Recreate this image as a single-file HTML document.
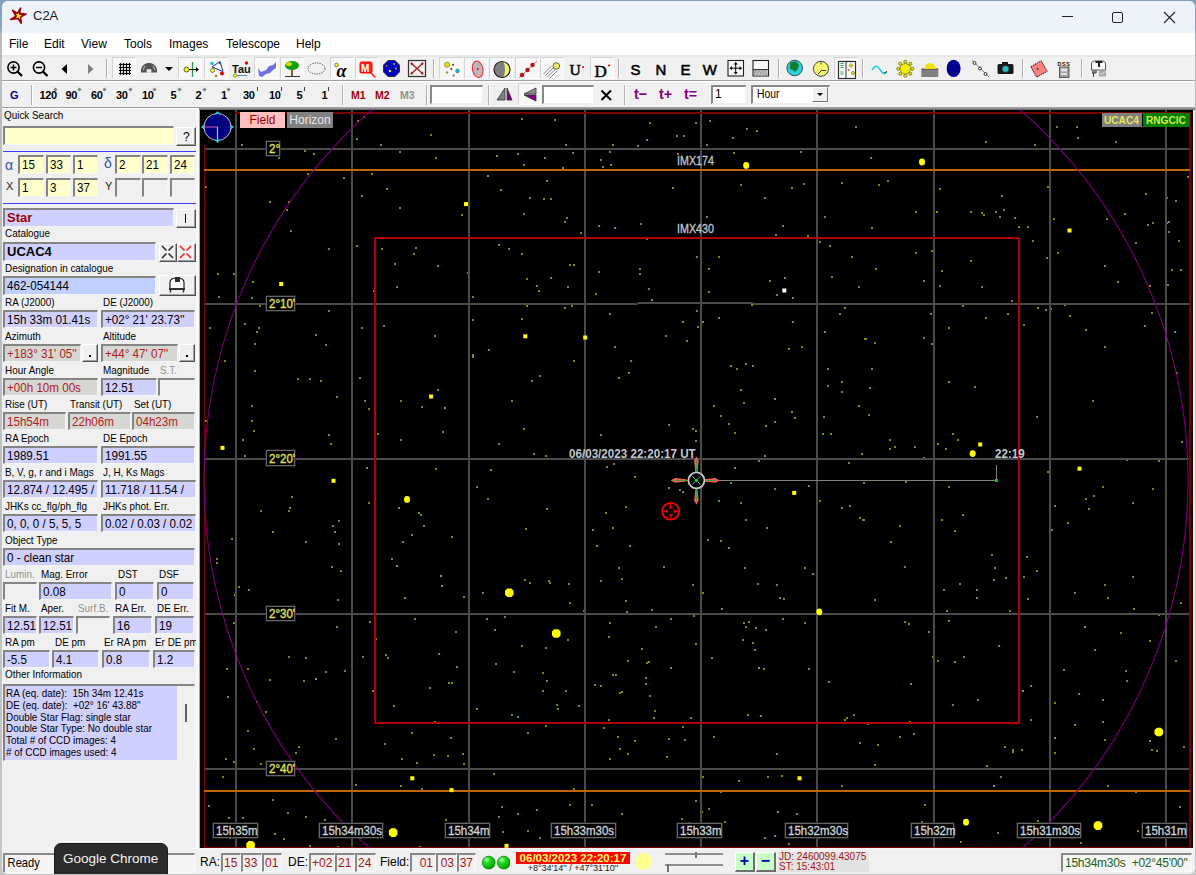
<!DOCTYPE html><html><head><meta charset="utf-8"><style>
*{box-sizing:border-box;margin:0;padding:0}
html,body{width:1196px;height:875px;overflow:hidden;background:linear-gradient(to bottom,#7f9fbd 0,#8aa8c4 28px,#b8bcc0 36px,#c4c4c4 100%);font-family:"Liberation Sans",sans-serif;font-size:11px;color:#000;position:relative}
.a{position:absolute}
.m{position:absolute;top:37px;font-size:12px;color:#000;line-height:14px}
.fld{position:absolute;border-top:2px solid #848484;border-left:2px solid #848484;border-right:1px solid #f4f4f4;border-bottom:1px solid #f4f4f4;font-size:13.5px;letter-spacing:0;padding-left:2px;line-height:16px;white-space:nowrap;overflow:hidden}
.sx{display:inline-block;transform:scaleX(.86);transform-origin:0 50%}
.y{background:#ffffcc}
.l{background:#d0d0fe}
.lb{background:#c0d0fe}
.g{background:#d6d6d2;color:#b01c1c}
.e{background:#f0f0f0}
.lbl{position:absolute;font-size:11.5px;letter-spacing:0;white-space:nowrap;line-height:12px;transform:scaleX(.86);transform-origin:0 0}
.dis{color:#909090}
.btn{position:absolute;background:#f0f0f0;border-top:1px solid #fff;border-left:1px solid #fff;border-right:1px solid #505050;border-bottom:1px solid #505050;box-shadow:inset -1px -1px 0 #a0a0a0}
.ti{position:absolute;font-size:12px;font-weight:bold;line-height:14px;white-space:nowrap}
</style></head><body><div id="w" style="position:absolute;left:0;top:0;width:1196px;height:875px;background:#f0f0f0;clip-path:inset(1px 1px 1px 2px round 6px)">
<div class="a" style="left:0;top:0;width:1196px;height:33px;background:#eef2f9"></div>
<div class="a" style="left:0;top:33px;width:1196px;height:22px;background:#fff"></div>
<span class="a" style="left:33px;top:8px;font-size:13px;color:#1a1a1a">C2A</span>
<div class="a" style="left:1062px;top:16px;width:11px;height:1px;background:#222"></div>
<div class="a" style="left:1112px;top:12px;width:11px;height:11px;border:1px solid #222;border-radius:2px"></div>
<svg class="a" style="left:1163px;top:11px" width="13" height="13"><path d="M1 1L12 12M12 1L1 12" stroke="#222" stroke-width="1.1"/></svg>
<svg class="a" style="left:9px;top:7px" width="19" height="19" viewBox="0 0 19 19"><path d="M11.6 1.2 L10.6 6.2 L17 7 L11.6 10 L12.3 16.3 L8.8 11.4 L1.6 12.5 L7 9.3 L3.7 3.3 L8.3 6.5 Z" fill="#9c0000" stroke="#9c0000" stroke-width="1.6" stroke-linejoin="round"/><path d="M9.5 5.5l0.8 2.6 2.6 0.3-2.2 1.4 0.4 2.7-1.7-2-2.4 0.6 1.2-2.3-1.6-2.1 2.4 0.6z" fill="#ffff00"/></svg>
<span class="m" style="left:9px">File</span>
<span class="m" style="left:44px">Edit</span>
<span class="m" style="left:81px">View</span>
<span class="m" style="left:124px">Tools</span>
<span class="m" style="left:169px">Images</span>
<span class="m" style="left:226px">Telescope</span>
<span class="m" style="left:296px">Help</span>
<div class="a" style="left:0;top:55px;width:1196px;height:2px;background:#e8e8e8"></div>
<div class="a" style="left:0;top:80px;width:1196px;height:1px;background:#a0a0a0"></div>
<div class="a" style="left:0;top:81px;width:1196px;height:1px;background:#fff"></div>
<div class="a" style="left:0;top:107px;width:1196px;height:1px;background:#a0a0a0"></div>
<div class="a" style="left:0;top:108px;width:1196px;height:1px;background:#fff"></div>
<div class="a" style="left:112px;top:57px;width:24px;height:22px;background:#f7f7f7;border-top:1px solid #d4d4d4;border-left:1px solid #d4d4d4;border-right:1px solid #fcfcfc;border-bottom:1px solid #fcfcfc"></div>
<div class="a" style="left:178px;top:57px;width:24px;height:22px;background:#f7f7f7;border-top:1px solid #d4d4d4;border-left:1px solid #d4d4d4;border-right:1px solid #fcfcfc;border-bottom:1px solid #fcfcfc"></div>
<div class="a" style="left:204px;top:57px;width:24px;height:22px;background:#f7f7f7;border-top:1px solid #d4d4d4;border-left:1px solid #d4d4d4;border-right:1px solid #fcfcfc;border-bottom:1px solid #fcfcfc"></div>
<div class="a" style="left:254px;top:57px;width:24px;height:22px;background:#f7f7f7;border-top:1px solid #d4d4d4;border-left:1px solid #d4d4d4;border-right:1px solid #fcfcfc;border-bottom:1px solid #fcfcfc"></div>
<div class="a" style="left:280px;top:57px;width:24px;height:22px;background:#f7f7f7;border-top:1px solid #d4d4d4;border-left:1px solid #d4d4d4;border-right:1px solid #fcfcfc;border-bottom:1px solid #fcfcfc"></div>
<div class="a" style="left:330px;top:57px;width:24px;height:22px;background:#f7f7f7;border-top:1px solid #d4d4d4;border-left:1px solid #d4d4d4;border-right:1px solid #fcfcfc;border-bottom:1px solid #fcfcfc"></div>
<div class="a" style="left:355px;top:57px;width:24px;height:22px;background:#f7f7f7;border-top:1px solid #d4d4d4;border-left:1px solid #d4d4d4;border-right:1px solid #fcfcfc;border-bottom:1px solid #fcfcfc"></div>
<div class="a" style="left:439px;top:57px;width:24px;height:22px;background:#f7f7f7;border-top:1px solid #d4d4d4;border-left:1px solid #d4d4d4;border-right:1px solid #fcfcfc;border-bottom:1px solid #fcfcfc"></div>
<div class="a" style="left:464px;top:57px;width:24px;height:22px;background:#f7f7f7;border-top:1px solid #d4d4d4;border-left:1px solid #d4d4d4;border-right:1px solid #fcfcfc;border-bottom:1px solid #fcfcfc"></div>
<div class="a" style="left:489px;top:57px;width:24px;height:22px;background:#f7f7f7;border-top:1px solid #d4d4d4;border-left:1px solid #d4d4d4;border-right:1px solid #fcfcfc;border-bottom:1px solid #fcfcfc"></div>
<div class="a" style="left:515px;top:57px;width:24px;height:22px;background:#f7f7f7;border-top:1px solid #d4d4d4;border-left:1px solid #d4d4d4;border-right:1px solid #fcfcfc;border-bottom:1px solid #fcfcfc"></div>
<div class="a" style="left:540px;top:57px;width:24px;height:22px;background:#f7f7f7;border-top:1px solid #d4d4d4;border-left:1px solid #d4d4d4;border-right:1px solid #fcfcfc;border-bottom:1px solid #fcfcfc"></div>
<div class="a" style="left:590px;top:57px;width:24px;height:22px;background:#f7f7f7;border-top:1px solid #d4d4d4;border-left:1px solid #d4d4d4;border-right:1px solid #fcfcfc;border-bottom:1px solid #fcfcfc"></div>
<div class="a" style="left:834px;top:57px;width:24px;height:22px;background:#f7f7f7;border-top:1px solid #d4d4d4;border-left:1px solid #d4d4d4;border-right:1px solid #fcfcfc;border-bottom:1px solid #fcfcfc"></div>
<div class="a" style="left:106px;top:59px;width:1px;height:19px;background:#b0b0b0"></div><div class="a" style="left:107px;top:59px;width:1px;height:19px;background:#fff"></div>
<div class="a" style="left:433px;top:59px;width:1px;height:19px;background:#b0b0b0"></div><div class="a" style="left:434px;top:59px;width:1px;height:19px;background:#fff"></div>
<div class="a" style="left:618px;top:59px;width:1px;height:19px;background:#b0b0b0"></div><div class="a" style="left:619px;top:59px;width:1px;height:19px;background:#fff"></div>
<div class="a" style="left:778px;top:59px;width:1px;height:19px;background:#b0b0b0"></div><div class="a" style="left:779px;top:59px;width:1px;height:19px;background:#fff"></div>
<div class="a" style="left:862px;top:59px;width:1px;height:19px;background:#b0b0b0"></div><div class="a" style="left:863px;top:59px;width:1px;height:19px;background:#fff"></div>
<div class="a" style="left:1022px;top:59px;width:1px;height:19px;background:#b0b0b0"></div><div class="a" style="left:1023px;top:59px;width:1px;height:19px;background:#fff"></div>
<div class="a" style="left:1081px;top:59px;width:1px;height:19px;background:#b0b0b0"></div><div class="a" style="left:1082px;top:59px;width:1px;height:19px;background:#fff"></div>
<div class="a" style="left:31px;top:85px;width:1px;height:20px;background:#b0b0b0"></div><div class="a" style="left:32px;top:85px;width:1px;height:20px;background:#fff"></div>
<div class="a" style="left:342px;top:85px;width:1px;height:20px;background:#b0b0b0"></div><div class="a" style="left:343px;top:85px;width:1px;height:20px;background:#fff"></div>
<div class="a" style="left:426px;top:85px;width:1px;height:20px;background:#b0b0b0"></div><div class="a" style="left:427px;top:85px;width:1px;height:20px;background:#fff"></div>
<div class="a" style="left:488px;top:85px;width:1px;height:20px;background:#b0b0b0"></div><div class="a" style="left:489px;top:85px;width:1px;height:20px;background:#fff"></div>
<div class="a" style="left:624px;top:85px;width:1px;height:20px;background:#b0b0b0"></div><div class="a" style="left:625px;top:85px;width:1px;height:20px;background:#fff"></div>
<div class="a" style="left:518px;top:83px;width:23px;height:22px;background:#f7f7f7;border-top:1px solid #d4d4d4;border-left:1px solid #d4d4d4;border-right:1px solid #fcfcfc;border-bottom:1px solid #fcfcfc"></div>
<svg class="a" style="left:0;top:55px" width="1196" height="26" viewBox="0 55 1196 26"><circle cx="13.5" cy="67.5" r="5.6" fill="none" stroke="#000" stroke-width="1.6"/><path d="M17.5 71.5L22 76" stroke="#000" stroke-width="2.2"/><path d="M10.5 67.5h6M13.5 64.5v6" stroke="#000" stroke-width="1.6"/><circle cx="39" cy="67.5" r="5.6" fill="none" stroke="#000" stroke-width="1.6"/><path d="M43 71.5L47.5 76" stroke="#000" stroke-width="2.2"/><path d="M36 67.5h6" stroke="#000" stroke-width="1.6"/><path d="M67 64v10l-5.5-5z" fill="#000"/><path d="M88 64v10l5.5-5z" fill="#808080"/><path d="M119 64.5h12M119 67.5h12M119 70.5h12M119 73.5h12M120.5 63v12M123.5 63v12M126.5 63v12M129.5 63v12" stroke="#000" stroke-width="1.2"/><path d="M141 72.5v-3c1-4 4-6.5 8-6.5s7 2.5 8 6.5v3z" fill="#555"/><path d="M147 72.5v-3h4v3z M143 70l2-4 M155 70l-2-4" stroke="#ddd" stroke-width="0.8" fill="#eee"/><path d="M165 67h8l-4 4z" fill="#000"/><circle cx="186.5" cy="69.5" r="2.5" fill="#ffff00" stroke="#333" stroke-width="0.8"/><path d="M192.5 62v15" stroke="#20a040" stroke-width="1.3"/><path d="M189 69.5h8" stroke="#000" stroke-width="1.2"/><path d="M199 69.5l-3-2.5v5z" fill="#000"/><path d="M212 67l8-5.5 3 10z" fill="none" stroke="#2030a0" stroke-width="1"/><circle cx="212" cy="63.5" r="1.8" fill="#20c0e0"/><circle cx="220" cy="63" r="1.3" fill="#207080"/><circle cx="212.5" cy="70.5" r="2" fill="#ffff00" stroke="#333" stroke-width="0.6"/><circle cx="222" cy="73.5" r="2" fill="#e00000"/><circle cx="216" cy="76" r="1.3" fill="#a09020"/><text x="232" y="73" font-family="Liberation Sans" font-weight="bold" font-size="11" fill="#111">Tau</text><circle cx="246.5" cy="63" r="1.7" fill="#e00000"/><circle cx="235" cy="75.5" r="1.7" fill="#ffff00" stroke="#333" stroke-width="0.5"/><path d="M237 75.5h10" stroke="#2080a0" stroke-width="0.8"/><path d="M258 68l3 4 5-2 3-4 4-1 3-3v6l-3 2-3 3-4 1-4 3-3-1z" fill="#7070e0"/><ellipse cx="292" cy="65.5" rx="7" ry="4.5" fill="#10a010"/><ellipse cx="289" cy="64" rx="3" ry="2" fill="#d0e000"/><path d="M291 69h2v7h-2z" fill="#806020"/><path d="M285 76.5h15" stroke="#333" stroke-width="1.2"/><ellipse cx="316.5" cy="68.5" rx="8.5" ry="5.5" fill="none" stroke="#404040" stroke-width="1" stroke-dasharray="1.2 1.2"/><circle cx="336.5" cy="65" r="1.8" fill="#ffff00" stroke="#333" stroke-width="0.6"/><text x="336.5" y="76.5" font-family="Liberation Serif" font-style="italic" font-weight="bold" font-size="18" fill="#000">α</text><rect x="360" y="62" width="12" height="11" rx="1.5" fill="#ff2020" stroke="#ff0000" stroke-width="1"/><text x="361" y="71.5" font-family="Liberation Sans" font-weight="bold" font-size="10" fill="#fff">M</text><path d="M371 73l4.5 4.5" stroke="#ff0000" stroke-width="1.2"/><path d="M388 60.5h7l4.5 4.5v7l-4.5 4.5h-7l-4.5-4.5v-7z" fill="#0000c0" stroke="#202020" stroke-width="0.8"/><circle cx="390" cy="71" r="1.3" fill="#e0e000"/><circle cx="394" cy="64" r="1" fill="#c0c000"/><circle cx="396" cy="68.5" r="1" fill="#c0c000"/><circle cx="386.5" cy="66" r="0.8" fill="#c0c000"/><rect x="408.5" y="60.5" width="17" height="16" fill="#f0f0f0" stroke="#303030" stroke-width="1.2"/><path d="M411 63l12 11M423 63l-12 11" stroke="#a02020" stroke-width="1.3"/><path d="M410.5 62.5l3 0.5-2.5 2.5z M423.5 62.5l-3 0.5 2.5 2.5z M410.5 74.5l3-0.5-2.5-2.5z M423.5 74.5l-3-0.5 2.5-2.5z" fill="#a02020"/><circle cx="447" cy="64.7" r="2.6" fill="#e8e000" stroke="#555" stroke-width="0.5"/><circle cx="453" cy="64.7" r="1" fill="#802020"/><circle cx="451.3" cy="69" r="1" fill="#802020"/><circle cx="457.5" cy="71" r="1.9" fill="#20c0c0" stroke="#333" stroke-width="0.4"/><circle cx="447" cy="72.5" r="1.2" fill="#a09040"/><circle cx="453.7" cy="75.5" r="1.2" fill="#909090"/><ellipse cx="477.7" cy="69.3" rx="5.3" ry="8.3" transform="rotate(-12 477.7 69.3)" fill="#b8b8b8" stroke="#ff2020" stroke-width="1"/><circle cx="477.7" cy="69" r="1" fill="#ff0000"/><circle cx="502" cy="69.5" r="8" fill="#808080"/><path d="M502 61.5a8 8 0 0 1 0 16a3 8 0 0 0 0-16z" fill="#f4f070"/><circle cx="502" cy="69.5" r="8" fill="none" stroke="#202020" stroke-width="1.2"/><path d="M519 78L537 61" stroke="#c04040" stroke-width="0.8"/><circle cx="522" cy="75" r="1.9" fill="#e00000" stroke="#600" stroke-width="0.5"/><circle cx="527.5" cy="70" r="1.9" fill="#e00000" stroke="#600" stroke-width="0.5"/><circle cx="532.5" cy="65" r="1.9" fill="#e00000" stroke="#600" stroke-width="0.5"/><path d="M545 76l8-8M547 77.5l8-8M549 79l8-8M543.5 74l8-8" stroke="#606060" stroke-width="0.8"/><circle cx="556.3" cy="66" r="3.3" fill="#f0f070" stroke="#404040" stroke-width="0.8"/><text x="569.5" y="74.7" font-family="Liberation Serif" font-size="15.5" fill="#000" stroke="#000" stroke-width="0.5">U</text><circle cx="583" cy="67" r="1.1" fill="#ff0000"/><text x="594.5" y="77" font-family="Liberation Serif" font-size="17" fill="#000" stroke="#000" stroke-width="0.5">D</text><circle cx="609" cy="65.5" r="1.1" fill="#ff0000"/><text x="630.5" y="74.5" font-family="Liberation Sans" font-size="15" fill="#000" stroke="#000" stroke-width="0.55">S</text><text x="655.5" y="74.5" font-family="Liberation Sans" font-size="15" fill="#000" stroke="#000" stroke-width="0.55">N</text><text x="680.5" y="74.5" font-family="Liberation Sans" font-size="15" fill="#000" stroke="#000" stroke-width="0.55">E</text><text x="702.8" y="74.5" font-family="Liberation Sans" font-size="15" fill="#000" stroke="#000" stroke-width="0.55">W</text><rect x="728" y="60.5" width="15.5" height="15.5" fill="#f8f8f8" stroke="#202020" stroke-width="1.1"/><path d="M735.7 62.5v11.5M730 68.2h11.5" stroke="#000" stroke-width="1"/><path d="M735.7 62l-2 2.5h4z M735.7 74.5l-2-2.5h4z M729.5 68.2l2.5-2v4z M742 68.2l-2.5-2v4z" fill="#000"/><rect x="753" y="60.5" width="15.5" height="15.5" fill="#f8f8f8" stroke="#202020" stroke-width="1.1"/><rect x="754" y="70" width="13.5" height="5.5" fill="#a0a0a0"/><path d="M755 75.5l3-5M758 75.5l3-5M761 75.5l3-5M764 75.5l3-5" stroke="#e0e0e0" stroke-width="0.8"/><path d="M753 69.5h15.5" stroke="#202020" stroke-width="0.9"/><circle cx="794.7" cy="68" r="7.8" fill="#30d0e0" stroke="#203040" stroke-width="0.8"/><path d="M790 63c2-1 5-2 7-1l2 3-1 4 -3 3-2-2-3-1z" fill="#108030"/><circle cx="821" cy="68.8" r="7.5" fill="#f8f870" stroke="#404040" stroke-width="1"/><path d="M821 62.5v2M818 74l3.5-3.5h4.5" stroke="#303030" stroke-width="1" fill="none"/><rect x="838.5" y="61.5" width="17" height="17" fill="#fafafa" stroke="#303030" stroke-width="1.2"/><path d="M846 61.5v17" stroke="#303030" stroke-width="1"/><path d="M840.5 63.5h3M840.5 65.5h3M840.5 67.5h3M840.5 72h3M840.5 74h3" stroke="#20b040" stroke-width="1.2"/><path d="M849 65.5l2-2 2 2-2 2z M851 73l2-2 2 2-2 2z" fill="#e0d000" stroke="#606000" stroke-width="0.5"/><circle cx="848.5" cy="70" r="0.8" fill="#c00000"/><path d="M872 70c2-3 4-5 6-3s3 5 5 6 3 0 4-1" fill="none" stroke="#20d0e0" stroke-width="1.6"/><path d="M884 73c1 0 2-1 3-2" stroke="#303030" stroke-width="1"/><g fill="#e8e000" stroke="#505000" stroke-width="0.6"><circle cx="912.30" cy="68.80" r="1.6"/><circle cx="910.25" cy="73.75" r="1.6"/><circle cx="905.30" cy="75.80" r="1.6"/><circle cx="900.35" cy="73.75" r="1.6"/><circle cx="898.30" cy="68.80" r="1.6"/><circle cx="900.35" cy="63.85" r="1.6"/><circle cx="905.30" cy="61.80" r="1.6"/><circle cx="910.25" cy="63.85" r="1.6"/></g><circle cx="905.3" cy="68.8" r="5.2" fill="#f4f000" stroke="#606000" stroke-width="0.6"/><rect x="921.3" y="69" width="17" height="8" fill="#808080"/><path d="M921.3 69h17" stroke="#303030" stroke-width="0.8"/><path d="M924.5 69a5.4 5.8 0 0 1 11 0z" fill="#f0e000"/><ellipse cx="953.6" cy="68.4" rx="7" ry="8.6" fill="#000090"/><path d="M972 60.3L989 77" stroke="#404040" stroke-width="0.7"/><circle cx="974.5" cy="63" r="1.5" fill="#f0f0f0" stroke="#222" stroke-width="0.9"/><circle cx="980" cy="68.5" r="1.5" fill="#f0f0f0" stroke="#222" stroke-width="0.9"/><circle cx="985.5" cy="74" r="1.5" fill="#f0f0f0" stroke="#222" stroke-width="0.9"/><rect x="997.5" y="64" width="16" height="10" rx="1.5" fill="#181818"/><rect x="1002" y="62" width="6" height="3" fill="#181818"/><circle cx="1005.5" cy="69" r="3.3" fill="#20c0c0" stroke="#404040" stroke-width="0.6"/><rect x="1033" y="63" width="12" height="12" transform="rotate(-30 1039 69)" fill="#ff8080" stroke="#202020" stroke-width="0.9" stroke-dasharray="1.5 0.8"/><circle cx="1037.5" cy="69" r="1" fill="#404040"/><text x="1057.5" y="65.5" font-family="Liberation Sans" font-weight="bold" font-size="5.5" fill="#111" letter-spacing="0.6">DSS</text><rect x="1059.5" y="67" width="9.5" height="10.5" fill="#a0a0a0" stroke="#404040" stroke-width="0.8"/><rect x="1061" y="68.5" width="6" height="3" fill="#e0e0e0"/><rect x="1061" y="73" width="6" height="2" fill="#e0e0e0"/><path d="M1091.5 64c0-2 1.5-3 3-3h8c1.5 0 3 1 3 3v6h-14z" fill="#fff" stroke="#404040" stroke-width="0.9"/><path d="M1095.5 61h7v2h-2.5v4h-2v-4h-2.5z" fill="#202020"/><rect x="1092" y="70" width="5" height="3" fill="#808080"/><path d="M1093.5 73v4M1092 73h4" stroke="#404040" stroke-width="1"/><rect x="1099" y="69.5" width="7" height="7" fill="#a8a8a8"/><path d="M1100.5 73l1.5 1.5 3-3" stroke="#e8e8e8" stroke-width="0.9" fill="none"/></svg><div class="a" style="left:10px;top:88px;font-size:11px;font-weight:bold;color:#0000a8;line-height:14px">G</div><div class="a" style="left:39.5px;top:88px;font-size:11px;font-weight:bold;line-height:14px;white-space:nowrap;letter-spacing:-0.4px">120</div><div class="a" style="left:53.8px;top:87.5px;width:3px;height:3px;background:#808080;transform:rotate(45deg)"></div><div class="a" style="left:65.5px;top:88px;font-size:11px;font-weight:bold;line-height:14px;white-space:nowrap;letter-spacing:-0.4px">90</div><div class="a" style="left:78.0px;top:87.5px;width:3px;height:3px;background:#808080;transform:rotate(45deg)"></div><div class="a" style="left:91px;top:88px;font-size:11px;font-weight:bold;line-height:14px;white-space:nowrap;letter-spacing:-0.4px">60</div><div class="a" style="left:102.5px;top:87.5px;width:3px;height:3px;background:#808080;transform:rotate(45deg)"></div><div class="a" style="left:116px;top:88px;font-size:11px;font-weight:bold;line-height:14px;white-space:nowrap;letter-spacing:-0.4px">30</div><div class="a" style="left:128.5px;top:87.5px;width:3px;height:3px;background:#808080;transform:rotate(45deg)"></div><div class="a" style="left:142px;top:88px;font-size:11px;font-weight:bold;line-height:14px;white-space:nowrap;letter-spacing:-0.4px">10</div><div class="a" style="left:152.5px;top:87.5px;width:3px;height:3px;background:#808080;transform:rotate(45deg)"></div><div class="a" style="left:170.5px;top:88px;font-size:11px;font-weight:bold;line-height:14px;white-space:nowrap;letter-spacing:-0.4px">5</div><div class="a" style="left:177.5px;top:87.5px;width:3px;height:3px;background:#808080;transform:rotate(45deg)"></div><div class="a" style="left:195.5px;top:88px;font-size:11px;font-weight:bold;line-height:14px;white-space:nowrap;letter-spacing:-0.4px">2</div><div class="a" style="left:202.5px;top:87.5px;width:3px;height:3px;background:#808080;transform:rotate(45deg)"></div><div class="a" style="left:221px;top:88px;font-size:11px;font-weight:bold;line-height:14px;white-space:nowrap;letter-spacing:-0.4px">1</div><div class="a" style="left:226.5px;top:87.5px;width:3px;height:3px;background:#808080;transform:rotate(45deg)"></div><div class="a" style="left:243px;top:88px;font-size:11px;font-weight:bold;line-height:14px;white-space:nowrap;letter-spacing:-0.4px">30</div><div class="a" style="left:256.5px;top:87px;width:1.2px;height:4px;background:#404040"></div><div class="a" style="left:269px;top:88px;font-size:11px;font-weight:bold;line-height:14px;white-space:nowrap;letter-spacing:-0.4px">10</div><div class="a" style="left:280.5px;top:87px;width:1.2px;height:4px;background:#404040"></div><div class="a" style="left:296.5px;top:88px;font-size:11px;font-weight:bold;line-height:14px;white-space:nowrap;letter-spacing:-0.4px">5</div><div class="a" style="left:303.5px;top:87px;width:1.2px;height:4px;background:#404040"></div><div class="a" style="left:321.5px;top:88px;font-size:11px;font-weight:bold;line-height:14px;white-space:nowrap;letter-spacing:-0.4px">1</div><div class="a" style="left:327.5px;top:87px;width:1.2px;height:4px;background:#404040"></div><div class="a" style="left:351px;top:88px;font-size:10.5px;font-weight:bold;line-height:14px;color:#a00000">M1</div><div class="a" style="left:375px;top:88px;font-size:10.5px;font-weight:bold;line-height:14px;color:#a00000">M2</div><div class="a" style="left:400px;top:88px;font-size:10.5px;font-weight:bold;line-height:14px;color:#909090">M3</div><div class="a" style="left:430px;top:85px;width:53px;height:19px;background:#fff;border-top:2px solid #888;border-left:2px solid #888;border-right:1px solid #f0f0f0;border-bottom:1px solid #f0f0f0;font-size:12px;line-height:15px;padding-left:2px;"></div><div class="a" style="left:542px;top:85px;width:52px;height:19px;background:#fff;border-top:2px solid #888;border-left:2px solid #888;border-right:1px solid #f0f0f0;border-bottom:1px solid #f0f0f0;font-size:12px;line-height:15px;padding-left:2px;"></div><div class="a" style="left:711px;top:85px;width:35px;height:19px;background:#fff;border-top:2px solid #888;border-left:2px solid #888;border-right:1px solid #f0f0f0;border-bottom:1px solid #f0f0f0;font-size:12px;line-height:15px;padding-left:2px;">1</div><div class="a" style="left:751px;top:85px;width:79px;height:19px;background:#fff;border-top:2px solid #888;border-left:2px solid #888;border-right:1px solid #f0f0f0;border-bottom:1px solid #f0f0f0;font-size:12px;line-height:15px;padding-left:2px;"><span class="sx" style="font-size:12px;margin-left:2px">Hour</span></div><div class="a" style="left:812px;top:87px;width:16px;height:15px;background:#f0f0f0;border-top:1px solid #fff;border-left:1px solid #fff;border-right:1px solid #707070;border-bottom:1px solid #707070"></div><svg class="a" style="left:0;top:81px" width="1196" height="26" viewBox="0 81 1196 26"><path d="M505 88v12h-8z" fill="#808080" stroke="#303030" stroke-width="0.8"/><path d="M507 88v12h5z" fill="#800080" stroke="#303030" stroke-width="0.8"/><path d="M536 88v6h-12z" fill="#909090" stroke="#303030" stroke-width="0.8"/><path d="M536 101v-6h-12z" fill="#800080" stroke="#303030" stroke-width="0.8"/><path d="M601.5 90.5l9.5 9.5M611 90.5l-9.5 9.5" stroke="#000" stroke-width="2"/><path d="M817 93h6l-3 3z" fill="#000"/></svg><div class="a" style="left:633.5px;top:86px;font-size:15px;font-weight:bold;line-height:16px;color:#800080;white-space:nowrap;transform:scaleX(.95);transform-origin:0 0">t−</div><div class="a" style="left:658.5px;top:86px;font-size:15px;font-weight:bold;line-height:16px;color:#800080;white-space:nowrap;transform:scaleX(.95);transform-origin:0 0">t+</div><div class="a" style="left:683.5px;top:86px;font-size:15px;font-weight:bold;line-height:16px;color:#800080;white-space:nowrap;transform:scaleX(.95);transform-origin:0 0">t=</div>
<span class="lbl " style="left:4px;top:109px">Quick Search</span>
<div class="fld y" style="left:3px;top:126px;width:171px;height:19px;"></div>
<div class="btn" style="left:176px;top:127px;width:20px;height:19px"><span class="a" style="left:6px;top:2px;font-size:12px">?</span></div>
<div class="a" style="left:3px;top:151px;width:194px;height:1px;background:#3c3cff"></div>
<span class="a" style="left:5px;top:157px;font-size:14px;color:#3050a0">α</span>
<span class="a" style="left:104px;top:155px;font-size:14px;color:#3050a0">δ</span>
<span class="a" style="left:6px;top:180px;font-size:11px;color:#222">X</span>
<span class="a" style="left:105px;top:180px;font-size:11px;color:#222">Y</span>
<div class="fld y" style="left:18px;top:155px;width:26px;height:19px;"><span class="sx">15</span></div>
<div class="fld y" style="left:46px;top:155px;width:25px;height:19px;"><span class="sx">33</span></div>
<div class="fld y" style="left:73px;top:155px;width:25px;height:19px;"><span class="sx">1</span></div>
<div class="fld y" style="left:115px;top:155px;width:26px;height:19px;"><span class="sx">2</span></div>
<div class="fld y" style="left:142px;top:155px;width:26px;height:19px;"><span class="sx">21</span></div>
<div class="fld y" style="left:170px;top:155px;width:25px;height:19px;"><span class="sx">24</span></div>
<div class="fld y" style="left:18px;top:178px;width:26px;height:19px;"><span class="sx">1</span></div>
<div class="fld y" style="left:46px;top:178px;width:25px;height:19px;"><span class="sx">3</span></div>
<div class="fld y" style="left:73px;top:178px;width:25px;height:19px;"><span class="sx">37</span></div>
<div class="fld e" style="left:115px;top:178px;width:26px;height:19px;"></div>
<div class="fld e" style="left:142px;top:178px;width:26px;height:19px;"></div>
<div class="fld e" style="left:170px;top:178px;width:25px;height:19px;"></div>
<div class="a" style="left:3px;top:203px;width:194px;height:1px;background:#3c3cff"></div>
<div class="fld l" style="left:3px;top:208px;width:171px;height:19px;"><b style="font-size:13px;color:#a00000;letter-spacing:0">Star</b></div>
<div class="btn" style="left:176px;top:209px;width:20px;height:19px"><div class="a" style="left:8px;top:4px;width:1px;height:9px;background:#000"></div></div>
<span class="lbl " style="left:5px;top:227px">Catalogue</span>
<div class="fld l" style="left:3px;top:242px;width:153px;height:19px;"><b style="font-size:13px;letter-spacing:0">UCAC4</b></div>
<div class="btn" style="left:159px;top:243px;width:18px;height:19px"></div>
<div class="btn" style="left:177px;top:243px;width:19px;height:19px"></div>
<svg class="a" style="left:159px;top:243px" width="37" height="19" viewBox="159 243 37 19"><path d="M162 246l4.5 4.5M173 246l-4.5 4.5M162 258l4.5-4.5M173 258l-4.5-4.5" stroke="#303030" stroke-width="1.6"/><path d="M180 246l4.5 4.5M191 246l-4.5 4.5M180 258l4.5-4.5M191 258l-4.5-4.5" stroke="#ff2020" stroke-width="1.6"/></svg>
<span class="lbl " style="left:5px;top:262px">Designation in catalogue</span>
<div class="fld lb" style="left:3px;top:276px;width:153px;height:19px;"><span class="sx">462-054144</span></div>
<div class="btn" style="left:159px;top:275px;width:37px;height:21px"></div>
<svg class="a" style="left:159px;top:275px" width="37" height="21" viewBox="159 275 37 21"><path d="M170 282.5c0-3 2-4.5 7-4.5s7 1.5 7 4.5v6.5h-14z" fill="#fff" stroke="#202020" stroke-width="1.2"/><rect x="175" y="277" width="5" height="5" fill="#303030"/><path d="M169 288h16v2h-16z" fill="#303030"/><path d="M170.5 290v2.5M183.5 290v2.5" stroke="#303030" stroke-width="1.5"/></svg>
<span class="lbl " style="left:5px;top:296px">RA (J2000)</span>
<span class="lbl " style="left:103px;top:296px">DE (J2000)</span>
<div class="fld l" style="left:3px;top:310px;width:95px;height:18px;"><span class="sx">15h 33m 01.41s</span></div>
<div class="fld l" style="left:101px;top:310px;width:94px;height:18px;"><span class="sx">+02° 21' 23.73''</span></div>
<span class="lbl " style="left:5px;top:330px">Azimuth</span>
<span class="lbl " style="left:103px;top:330px">Altitude</span>
<div class="fld g" style="left:3px;top:344px;width:78px;height:18px;"><span class="sx">+183° 31' 05''</span></div>
<div class="btn" style="left:82px;top:344px;width:16px;height:18px"><div class="a" style="left:6px;top:10px;width:2px;height:2px;background:#000"></div></div>
<div class="fld g" style="left:101px;top:344px;width:77px;height:18px;"><span class="sx">+44° 47' 07''</span></div>
<div class="btn" style="left:179px;top:344px;width:16px;height:18px"><div class="a" style="left:6px;top:10px;width:2px;height:2px;background:#000"></div></div>
<span class="lbl " style="left:5px;top:364px">Hour Angle</span>
<span class="lbl " style="left:103px;top:364px">Magnitude</span>
<span class="lbl dis" style="left:160px;top:364px">S.T.</span>
<div class="fld g" style="left:3px;top:378px;width:95px;height:18px;"><span class="sx">+00h 10m 00s</span></div>
<div class="fld l" style="left:101px;top:378px;width:56px;height:18px;"><span class="sx">12.51</span></div>
<div class="fld e" style="left:158px;top:378px;width:37px;height:18px;"></div>
<span class="lbl " style="left:5px;top:398px">Rise (UT)</span>
<span class="lbl " style="left:70px;top:398px">Transit (UT)</span>
<span class="lbl " style="left:134px;top:398px">Set (UT)</span>
<div class="fld g" style="left:3px;top:412px;width:63px;height:18px;"><span class="sx">15h54m</span></div>
<div class="fld g" style="left:68px;top:412px;width:63px;height:18px;"><span class="sx">22h06m</span></div>
<div class="fld g" style="left:132px;top:412px;width:63px;height:18px;"><span class="sx">04h23m</span></div>
<span class="lbl " style="left:5px;top:432px">RA Epoch</span>
<span class="lbl " style="left:103px;top:432px">DE Epoch</span>
<div class="fld l" style="left:3px;top:446px;width:95px;height:18px;"><span class="sx">1989.51</span></div>
<div class="fld l" style="left:101px;top:446px;width:94px;height:18px;"><span class="sx">1991.55</span></div>
<span class="lbl " style="left:5px;top:466px">B, V, g, r and i Mags</span>
<span class="lbl " style="left:103px;top:466px">J, H, Ks Mags</span>
<div class="fld l" style="left:3px;top:480px;width:95px;height:18px;"><span class="sx">12.874 / 12.495 /</span></div>
<div class="fld l" style="left:101px;top:480px;width:95px;height:18px;"><span class="sx">11.718 / 11.54 /</span></div>
<span class="lbl " style="left:5px;top:500px">JHKs cc_flg/ph_flg</span>
<span class="lbl " style="left:103px;top:500px">JHKs phot. Err.</span>
<div class="fld l" style="left:3px;top:514px;width:95px;height:18px;"><span class="sx">0, 0, 0 / 5, 5, 5</span></div>
<div class="fld l" style="left:101px;top:514px;width:95px;height:18px;"><span class="sx">0.02 / 0.03 / 0.02</span></div>
<span class="lbl " style="left:5px;top:534px">Object Type</span>
<div class="fld l" style="left:3px;top:548px;width:192px;height:18px;"><span class="sx">0 - clean star</span></div>
<span class="lbl dis" style="left:5px;top:568px">Lumin.</span>
<span class="lbl " style="left:41px;top:568px">Mag. Error</span>
<span class="lbl " style="left:118px;top:568px">DST</span>
<span class="lbl " style="left:159px;top:568px">DSF</span>
<div class="fld e" style="left:3px;top:582px;width:34px;height:18px;"></div>
<div class="fld l" style="left:39px;top:582px;width:73px;height:18px;"><span class="sx">0.08</span></div>
<div class="fld l" style="left:115px;top:582px;width:39px;height:18px;"><span class="sx">0</span></div>
<div class="fld l" style="left:157px;top:582px;width:37px;height:18px;"><span class="sx">0</span></div>
<span class="lbl " style="left:5px;top:602px">Fit M.</span>
<span class="lbl " style="left:41px;top:602px">Aper.</span>
<span class="lbl dis" style="left:78px;top:602px">Surf.B.</span>
<span class="lbl " style="left:115px;top:602px">RA Err.</span>
<span class="lbl " style="left:157px;top:602px">DE Err.</span>
<div class="fld l" style="left:3px;top:616px;width:34px;height:18px;"><span class="sx">12.51</span></div>
<div class="fld l" style="left:39px;top:616px;width:35px;height:18px;"><span class="sx">12.51</span></div>
<div class="fld e" style="left:76px;top:616px;width:34px;height:18px;"></div>
<div class="fld l" style="left:113px;top:616px;width:39px;height:18px;"><span class="sx">16</span></div>
<div class="fld l" style="left:155px;top:616px;width:39px;height:18px;"><span class="sx">19</span></div>
<span class="lbl " style="left:5px;top:636px">RA pm</span>
<span class="lbl " style="left:55px;top:636px">DE pm</span>
<span class="lbl " style="left:104px;top:636px">Er RA pm</span>
<span class="lbl " style="left:155px;top:636px">Er DE pm</span>
<div class="fld l" style="left:3px;top:650px;width:47px;height:18px;"><span class="sx">-5.5</span></div>
<div class="fld l" style="left:52px;top:650px;width:47px;height:18px;"><span class="sx">4.1</span></div>
<div class="fld l" style="left:102px;top:650px;width:48px;height:18px;"><span class="sx">0.8</span></div>
<div class="fld l" style="left:153px;top:650px;width:42px;height:18px;"><span class="sx">1.2</span></div>
<span class="lbl " style="left:5px;top:668px">Other Information</span>
<div class="fld l" style="left:3px;top:684px;width:192px;height:77px;padding:0"></div>
<div class="a" style="left:177px;top:686px;width:17px;height:74px;background:#f0f0f0"></div>
<div class="a" style="left:185px;top:704px;width:2px;height:18px;background:#606060"></div>
<span class="lbl" style="left:6px;top:687.0px;font-size:11.5px">RA (eq. date): &nbsp;15h 34m 12.41s</span>
<span class="lbl" style="left:6px;top:698.8px;font-size:11.5px">DE (eq. date): &nbsp;+02° 16' 43.88''</span>
<span class="lbl" style="left:6px;top:710.6px;font-size:11.5px">Double Star Flag: single star</span>
<span class="lbl" style="left:6px;top:722.4px;font-size:11.5px">Double Star Type: No double star</span>
<span class="lbl" style="left:6px;top:734.2px;font-size:11.5px">Total # of CCD images: 4</span>
<span class="lbl" style="left:6px;top:746.0px;font-size:11.5px"># of CCD images used: 4</span>
<div class="a" style="left:198px;top:108px;width:1px;height:742px;background:#fff"></div>
<div class="a" style="left:199px;top:108px;width:1px;height:742px;background:#a0a0a0"></div>
<svg class="a" style="left:200px;top:110px" width="996" height="738" viewBox="200 110 996 738" shape-rendering="crispEdges"><rect x="200" y="110" width="996" height="738" fill="#000"/>
<path fill="#888800" d="M241 144h2v2h-2zM299 148h2v2h-2zM304 150h2v2h-2zM313 153h2v2h-2zM278 157h2v2h-2zM356 138h2v2h-2zM363 116h2v2h-2zM357 120h2v2h-2zM380 144h2v2h-2zM399 151h2v2h-2zM430 134h2v2h-2zM435 157h2v2h-2zM521 118h2v2h-2zM496 155h2v2h-2zM517 153h2v2h-2zM523 164h2v2h-2zM205 186h2v2h-2zM307 173h2v2h-2zM343 177h2v2h-2zM371 173h2v2h-2zM386 188h2v2h-2zM361 195h2v2h-2zM500 189h2v2h-2zM529 197h2v2h-2zM269 201h2v2h-2zM288 201h2v2h-2zM286 209h2v2h-2zM399 207h2v2h-2zM461 214h2v2h-2zM523 213h2v2h-2zM290 230h2v2h-2zM235 238h2v2h-2zM328 248h2v2h-2zM356 245h2v2h-2zM381 248h2v2h-2zM415 247h2v2h-2zM413 253h2v2h-2zM437 265h2v2h-2zM394 263h2v2h-2zM498 244h2v2h-2zM508 248h2v2h-2zM521 253h2v2h-2zM217 273h2v2h-2zM233 273h2v2h-2zM252 281h2v2h-2zM396 286h2v2h-2zM373 290h2v2h-2zM467 272h2v2h-2zM468 277h2v2h-2zM526 278h2v2h-2zM218 296h2v2h-2zM251 297h2v2h-2zM259 305h2v2h-2zM472 296h2v2h-2zM526 305h2v2h-2zM209 327h2v2h-2zM244 323h2v2h-2zM258 327h2v2h-2zM256 331h2v2h-2zM328 310h2v2h-2zM315 334h2v2h-2zM361 327h2v2h-2zM383 325h2v2h-2zM472 319h2v2h-2zM521 318h2v2h-2zM254 343h2v2h-2zM325 344h2v2h-2zM434 335h2v2h-2zM488 349h2v2h-2zM472 354h2v2h-2zM554 119h2v2h-2zM649 122h2v2h-2zM695 122h2v2h-2zM709 120h2v2h-2zM746 128h2v2h-2zM756 130h2v2h-2zM855 126h2v2h-2zM565 144h2v2h-2zM612 144h2v2h-2zM637 145h2v2h-2zM646 139h2v2h-2zM676 135h2v2h-2zM683 135h2v2h-2zM706 144h2v2h-2zM732 137h2v2h-2zM572 152h2v2h-2zM609 151h2v2h-2zM544 157h2v2h-2zM600 159h2v2h-2zM610 164h2v2h-2zM602 166h2v2h-2zM562 167h2v2h-2zM677 153h2v2h-2zM733 152h2v2h-2zM800 151h2v2h-2zM546 180h2v2h-2zM672 187h2v2h-2zM740 184h2v2h-2zM791 187h2v2h-2zM803 183h2v2h-2zM841 182h2v2h-2zM543 198h2v2h-2zM550 198h2v2h-2zM764 197h2v2h-2zM566 217h2v2h-2zM564 221h2v2h-2zM706 216h2v2h-2zM824 216h2v2h-2zM580 232h2v2h-2zM598 225h2v2h-2zM614 227h2v2h-2zM640 223h2v2h-2zM782 225h2v2h-2zM775 234h2v2h-2zM807 235h2v2h-2zM646 238h2v2h-2zM819 241h2v2h-2zM829 245h2v2h-2zM851 256h2v2h-2zM696 256h2v2h-2zM718 256h2v2h-2zM569 264h2v2h-2zM573 264h2v2h-2zM639 268h2v2h-2zM639 273h2v2h-2zM708 268h2v2h-2zM598 271h2v2h-2zM550 277h2v2h-2zM831 276h2v2h-2zM769 280h2v2h-2zM784 277h2v2h-2zM536 285h2v2h-2zM538 290h2v2h-2zM567 286h2v2h-2zM648 288h2v2h-2zM708 291h2v2h-2zM595 293h2v2h-2zM651 299h2v2h-2zM776 294h2v2h-2zM792 297h2v2h-2zM858 286h2v2h-2zM564 307h2v2h-2zM571 305h2v2h-2zM751 304h2v2h-2zM844 307h2v2h-2zM839 313h2v2h-2zM609 313h2v2h-2zM696 310h2v2h-2zM682 321h2v2h-2zM702 321h2v2h-2zM718 317h2v2h-2zM697 326h2v2h-2zM792 321h2v2h-2zM824 331h2v2h-2zM665 335h2v2h-2zM686 340h2v2h-2zM614 346h2v2h-2zM788 348h2v2h-2zM801 346h2v2h-2zM864 338h2v2h-2zM870 157h2v2h-2zM985 141h2v2h-2zM1034 144h2v2h-2zM1056 126h2v2h-2zM1076 126h2v2h-2zM1077 137h2v2h-2zM1115 141h2v2h-2zM878 184h2v2h-2zM887 180h2v2h-2zM939 188h2v2h-2zM1001 195h2v2h-2zM1047 186h2v2h-2zM1145 193h2v2h-2zM1166 197h2v2h-2zM1175 200h2v2h-2zM1187 176h2v2h-2zM915 211h2v2h-2zM936 211h2v2h-2zM970 211h2v2h-2zM981 212h2v2h-2zM983 214h2v2h-2zM995 211h2v2h-2zM1003 209h2v2h-2zM999 216h2v2h-2zM1014 217h2v2h-2zM1053 218h2v2h-2zM1106 218h2v2h-2zM1124 213h2v2h-2zM1147 224h2v2h-2zM1152 222h2v2h-2zM1166 222h2v2h-2zM1168 221h2v2h-2zM1168 231h2v2h-2zM871 227h2v2h-2zM1018 226h2v2h-2zM1027 226h2v2h-2zM1032 240h2v2h-2zM1135 242h2v2h-2zM1178 240h2v2h-2zM915 252h2v2h-2zM931 250h2v2h-2zM1046 257h2v2h-2zM1057 252h2v2h-2zM970 260h2v2h-2zM1104 265h2v2h-2zM875 268h2v2h-2zM941 270h2v2h-2zM1171 269h2v2h-2zM1180 269h2v2h-2zM923 280h2v2h-2zM939 285h2v2h-2zM981 286h2v2h-2zM1117 281h2v2h-2zM1149 285h2v2h-2zM1167 284h2v2h-2zM1011 300h2v2h-2zM962 305h2v2h-2zM1037 307h2v2h-2zM1045 309h2v2h-2zM1050 308h2v2h-2zM1064 304h2v2h-2zM930 313h2v2h-2zM985 317h2v2h-2zM1007 313h2v2h-2zM1069 315h2v2h-2zM1151 312h2v2h-2zM948 327h2v2h-2zM1023 324h2v2h-2zM1085 329h2v2h-2zM1144 325h2v2h-2zM1174 331h2v2h-2zM865 338h2v2h-2zM874 342h2v2h-2zM923 337h2v2h-2zM931 343h2v2h-2zM1104 346h2v2h-2zM224 360h2v2h-2zM254 370h2v2h-2zM297 378h2v2h-2zM309 378h2v2h-2zM320 380h2v2h-2zM359 377h2v2h-2zM336 396h2v2h-2zM364 400h2v2h-2zM368 408h2v2h-2zM251 405h2v2h-2zM251 420h2v2h-2zM253 430h2v2h-2zM242 439h2v2h-2zM244 455h2v2h-2zM205 420h2v2h-2zM328 434h2v2h-2zM330 443h2v2h-2zM377 433h2v2h-2zM400 400h2v2h-2zM400 439h2v2h-2zM421 406h2v2h-2zM437 389h2v2h-2zM442 431h2v2h-2zM468 408h2v2h-2zM472 356h2v2h-2zM511 400h2v2h-2zM523 428h2v2h-2zM531 380h2v2h-2zM498 443h2v2h-2zM490 469h2v2h-2zM366 467h2v2h-2zM435 468h2v2h-2zM476 486h2v2h-2zM487 498h2v2h-2zM291 496h2v2h-2zM260 510h2v2h-2zM289 507h2v2h-2zM288 510h2v2h-2zM368 502h2v2h-2zM398 507h2v2h-2zM418 512h2v2h-2zM420 514h2v2h-2zM423 525h2v2h-2zM338 520h2v2h-2zM332 525h2v2h-2zM334 531h2v2h-2zM338 543h2v2h-2zM305 541h2v2h-2zM272 531h2v2h-2zM231 538h2v2h-2zM411 534h2v2h-2zM402 541h2v2h-2zM451 536h2v2h-2zM525 528h2v2h-2zM216 558h2v2h-2zM216 562h2v2h-2zM331 566h2v2h-2zM340 570h2v2h-2zM391 558h2v2h-2zM238 586h2v2h-2zM248 589h2v2h-2zM234 594h2v2h-2zM337 599h2v2h-2zM404 597h2v2h-2zM463 596h2v2h-2zM482 592h2v2h-2zM524 579h2v2h-2zM529 582h2v2h-2zM573 360h2v2h-2zM630 360h2v2h-2zM539 375h2v2h-2zM618 377h2v2h-2zM628 372h2v2h-2zM730 365h2v2h-2zM736 368h2v2h-2zM745 363h2v2h-2zM752 365h2v2h-2zM827 368h2v2h-2zM816 372h2v2h-2zM827 385h2v2h-2zM841 381h2v2h-2zM841 391h2v2h-2zM858 405h2v2h-2zM740 389h2v2h-2zM743 402h2v2h-2zM713 405h2v2h-2zM720 415h2v2h-2zM728 423h2v2h-2zM734 432h2v2h-2zM765 425h2v2h-2zM774 421h2v2h-2zM791 411h2v2h-2zM794 417h2v2h-2zM823 416h2v2h-2zM822 433h2v2h-2zM830 433h2v2h-2zM668 424h2v2h-2zM692 428h2v2h-2zM695 430h2v2h-2zM695 440h2v2h-2zM584 431h2v2h-2zM600 434h2v2h-2zM533 453h2v2h-2zM545 455h2v2h-2zM584 461h2v2h-2zM606 466h2v2h-2zM613 463h2v2h-2zM634 476h2v2h-2zM764 455h2v2h-2zM758 460h2v2h-2zM734 467h2v2h-2zM848 462h2v2h-2zM861 453h2v2h-2zM730 482h2v2h-2zM774 488h2v2h-2zM808 485h2v2h-2zM863 482h2v2h-2zM668 487h2v2h-2zM679 489h2v2h-2zM682 491h2v2h-2zM718 500h2v2h-2zM740 502h2v2h-2zM819 500h2v2h-2zM841 507h2v2h-2zM849 505h2v2h-2zM859 517h2v2h-2zM862 519h2v2h-2zM546 508h2v2h-2zM605 512h2v2h-2zM625 506h2v2h-2zM592 529h2v2h-2zM612 527h2v2h-2zM745 519h2v2h-2zM766 527h2v2h-2zM707 539h2v2h-2zM720 540h2v2h-2zM728 547h2v2h-2zM596 545h2v2h-2zM629 545h2v2h-2zM618 567h2v2h-2zM663 566h2v2h-2zM744 567h2v2h-2zM804 567h2v2h-2zM812 573h2v2h-2zM548 580h2v2h-2zM549 582h2v2h-2zM568 583h2v2h-2zM600 580h2v2h-2zM621 578h2v2h-2zM692 584h2v2h-2zM702 592h2v2h-2zM757 583h2v2h-2zM776 584h2v2h-2zM779 597h2v2h-2zM783 598h2v2h-2zM625 600h2v2h-2zM871 368h2v2h-2zM869 387h2v2h-2zM868 414h2v2h-2zM948 381h2v2h-2zM974 386h2v2h-2zM952 433h2v2h-2zM957 439h2v2h-2zM937 443h2v2h-2zM945 448h2v2h-2zM889 439h2v2h-2zM894 446h2v2h-2zM889 448h2v2h-2zM914 446h2v2h-2zM923 457h2v2h-2zM1036 416h2v2h-2zM1049 405h2v2h-2zM1092 400h2v2h-2zM1176 372h2v2h-2zM1181 441h2v2h-2zM1126 459h2v2h-2zM1158 460h2v2h-2zM1047 471h2v2h-2zM1102 486h2v2h-2zM1152 488h2v2h-2zM863 482h2v2h-2zM905 481h2v2h-2zM948 486h2v2h-2zM1054 505h2v2h-2zM1085 498h2v2h-2zM1093 495h2v2h-2zM1088 508h2v2h-2zM1132 502h2v2h-2zM863 519h2v2h-2zM941 519h2v2h-2zM962 514h2v2h-2zM899 525h2v2h-2zM954 530h2v2h-2zM1049 516h2v2h-2zM1067 522h2v2h-2zM1051 529h2v2h-2zM890 541h2v2h-2zM991 554h2v2h-2zM1026 556h2v2h-2zM994 567h2v2h-2zM1036 570h2v2h-2zM904 566h2v2h-2zM1005 577h2v2h-2zM993 579h2v2h-2zM1023 576h2v2h-2zM959 583h2v2h-2zM943 589h2v2h-2zM976 589h2v2h-2zM976 597h2v2h-2zM874 599h2v2h-2zM1027 598h2v2h-2zM1074 592h2v2h-2zM1104 584h2v2h-2zM1107 597h2v2h-2zM1132 576h2v2h-2zM1165 585h2v2h-2zM233 622h2v2h-2zM336 626h2v2h-2zM357 613h2v2h-2zM369 621h2v2h-2zM375 638h2v2h-2zM414 618h2v2h-2zM455 631h2v2h-2zM486 618h2v2h-2zM504 616h2v2h-2zM494 629h2v2h-2zM521 645h2v2h-2zM226 668h2v2h-2zM247 668h2v2h-2zM288 656h2v2h-2zM305 657h2v2h-2zM325 671h2v2h-2zM344 670h2v2h-2zM303 680h2v2h-2zM269 679h2v2h-2zM362 656h2v2h-2zM385 654h2v2h-2zM387 657h2v2h-2zM438 653h2v2h-2zM456 666h2v2h-2zM495 663h2v2h-2zM513 671h2v2h-2zM227 696h2v2h-2zM372 690h2v2h-2zM429 687h2v2h-2zM448 682h2v2h-2zM451 682h2v2h-2zM256 701h2v2h-2zM265 711h2v2h-2zM393 705h2v2h-2zM476 708h2v2h-2zM511 714h2v2h-2zM517 716h2v2h-2zM434 721h2v2h-2zM247 730h2v2h-2zM335 738h2v2h-2zM411 732h2v2h-2zM450 737h2v2h-2zM527 732h2v2h-2zM253 748h2v2h-2zM298 746h2v2h-2zM295 752h2v2h-2zM225 758h2v2h-2zM233 761h2v2h-2zM260 763h2v2h-2zM384 743h2v2h-2zM401 758h2v2h-2zM416 762h2v2h-2zM433 754h2v2h-2zM447 755h2v2h-2zM462 753h2v2h-2zM463 763h2v2h-2zM493 773h2v2h-2zM222 776h2v2h-2zM355 784h2v2h-2zM400 785h2v2h-2zM421 788h2v2h-2zM208 805h2v2h-2zM272 799h2v2h-2zM228 817h2v2h-2zM242 817h2v2h-2zM287 812h2v2h-2zM305 816h2v2h-2zM324 819h2v2h-2zM375 823h2v2h-2zM445 819h2v2h-2zM465 822h2v2h-2zM498 816h2v2h-2zM501 806h2v2h-2zM517 813h2v2h-2zM527 830h2v2h-2zM502 831h2v2h-2zM274 833h2v2h-2zM283 838h2v2h-2zM229 837h2v2h-2zM309 845h2v2h-2zM337 846h2v2h-2zM359 837h2v2h-2zM419 846h2v2h-2zM569 602h2v2h-2zM583 610h2v2h-2zM626 611h2v2h-2zM644 613h2v2h-2zM651 609h2v2h-2zM670 618h2v2h-2zM693 615h2v2h-2zM721 608h2v2h-2zM782 618h2v2h-2zM804 622h2v2h-2zM609 622h2v2h-2zM655 626h2v2h-2zM743 622h2v2h-2zM748 621h2v2h-2zM745 626h2v2h-2zM755 627h2v2h-2zM765 629h2v2h-2zM567 639h2v2h-2zM608 636h2v2h-2zM545 647h2v2h-2zM641 648h2v2h-2zM695 643h2v2h-2zM742 639h2v2h-2zM752 642h2v2h-2zM754 649h2v2h-2zM816 644h2v2h-2zM711 657h2v2h-2zM627 660h2v2h-2zM646 662h2v2h-2zM648 661h2v2h-2zM670 667h2v2h-2zM763 668h2v2h-2zM808 668h2v2h-2zM542 672h2v2h-2zM546 680h2v2h-2zM612 674h2v2h-2zM615 674h2v2h-2zM645 677h2v2h-2zM645 683h2v2h-2zM594 684h2v2h-2zM600 685h2v2h-2zM542 690h2v2h-2zM565 690h2v2h-2zM619 692h2v2h-2zM621 691h2v2h-2zM649 695h2v2h-2zM828 681h2v2h-2zM556 704h2v2h-2zM557 708h2v2h-2zM578 705h2v2h-2zM584 709h2v2h-2zM654 710h2v2h-2zM653 717h2v2h-2zM690 717h2v2h-2zM747 714h2v2h-2zM760 715h2v2h-2zM853 714h2v2h-2zM844 719h2v2h-2zM846 717h2v2h-2zM608 719h2v2h-2zM545 725h2v2h-2zM603 727h2v2h-2zM682 726h2v2h-2zM617 736h2v2h-2zM634 740h2v2h-2zM668 738h2v2h-2zM684 739h2v2h-2zM713 736h2v2h-2zM859 742h2v2h-2zM619 748h2v2h-2zM627 753h2v2h-2zM609 758h2v2h-2zM666 756h2v2h-2zM776 753h2v2h-2zM702 776h2v2h-2zM738 780h2v2h-2zM767 776h2v2h-2zM781 775h2v2h-2zM841 785h2v2h-2zM573 788h2v2h-2zM720 791h2v2h-2zM695 800h2v2h-2zM708 808h2v2h-2zM701 811h2v2h-2zM569 804h2v2h-2zM591 804h2v2h-2zM621 813h2v2h-2zM536 809h2v2h-2zM681 818h2v2h-2zM688 822h2v2h-2zM724 821h2v2h-2zM796 813h2v2h-2zM539 837h2v2h-2zM764 837h2v2h-2zM774 835h2v2h-2zM788 843h2v2h-2zM818 837h2v2h-2zM946 610h2v2h-2zM1009 610h2v2h-2zM1133 608h2v2h-2zM1158 614h2v2h-2zM1180 602h2v2h-2zM904 621h2v2h-2zM908 623h2v2h-2zM948 620h2v2h-2zM928 631h2v2h-2zM1120 632h2v2h-2zM1149 640h2v2h-2zM998 645h2v2h-2zM1094 649h2v2h-2zM932 656h2v2h-2zM937 660h2v2h-2zM954 661h2v2h-2zM963 656h2v2h-2zM1063 669h2v2h-2zM1125 670h2v2h-2zM1126 680h2v2h-2zM1175 660h2v2h-2zM910 683h2v2h-2zM1030 685h2v2h-2zM1078 693h2v2h-2zM1102 699h2v2h-2zM1054 702h2v2h-2zM952 704h2v2h-2zM977 699h2v2h-2zM909 721h2v2h-2zM867 723h2v2h-2zM1030 719h2v2h-2zM1074 724h2v2h-2zM1102 721h2v2h-2zM899 736h2v2h-2zM913 733h2v2h-2zM1104 739h2v2h-2zM877 744h2v2h-2zM1004 746h2v2h-2zM1012 749h2v2h-2zM1012 751h2v2h-2zM1021 749h2v2h-2zM1054 752h2v2h-2zM1151 749h2v2h-2zM1156 750h2v2h-2zM1183 746h2v2h-2zM874 764h2v2h-2zM986 765h2v2h-2zM1000 776h2v2h-2zM1107 785h2v2h-2zM1135 791h2v2h-2zM924 804h2v2h-2zM921 821h2v2h-2zM1179 806h2v2h-2zM1037 820h2v2h-2zM997 832h2v2h-2zM960 841h2v2h-2zM1137 830h2v2h-2zM1071 837h2v2h-2zM1080 842h2v2h-2z"/>
<path fill="#8c8c8c" d="M487 175h2v2h-2zM444 407h2v2h-2zM396 565h2v2h-2zM440 575h2v2h-2zM441 585h2v2h-2zM774 398h2v2h-2zM315 678h2v2h-2zM758 667h2v2h-2zM777 811h2v2h-2zM1084 626h2v2h-2zM1022 690h2v2h-2zM1054 737h2v2h-2zM1149 740h2v2h-2zM993 785h2v2h-2z"/>
<rect x="235" y="110" width="2" height="738" fill="#4a4a4a"/>
<rect x="351" y="110" width="2" height="738" fill="#4a4a4a"/>
<rect x="468" y="110" width="2" height="738" fill="#4a4a4a"/>
<rect x="584" y="110" width="2" height="738" fill="#4a4a4a"/>
<rect x="700" y="110" width="2" height="738" fill="#4a4a4a"/>
<rect x="816" y="110" width="2" height="738" fill="#4a4a4a"/>
<rect x="933" y="110" width="2" height="738" fill="#4a4a4a"/>
<rect x="1049" y="110" width="2" height="738" fill="#4a4a4a"/>
<rect x="1165" y="110" width="2" height="738" fill="#4a4a4a"/>
<rect x="204" y="148" width="986" height="2" fill="#4a4a4a"/>
<rect x="204" y="458" width="986" height="2" fill="#4a4a4a"/>
<rect x="204" y="613" width="986" height="2" fill="#4a4a4a"/>
<rect x="204" y="768" width="986" height="2" fill="#4a4a4a"/>
<rect x="204" y="303" width="434" height="2" fill="#4a4a4a"/><rect x="638" y="302" width="115" height="2" fill="#4a4a4a"/><rect x="753" y="303" width="437" height="2" fill="#4a4a4a"/>
<rect x="204" y="112" width="986" height="1.5" fill="#780000"/>
<rect x="204" y="846.5" width="986" height="1.5" fill="#780000"/>
<rect x="203.5" y="112" width="1.5" height="735" fill="#780000"/>
<rect x="1189" y="112" width="1.5" height="735" fill="#780000"/>
<rect x="204" y="169" width="986" height="2" fill="#c46400"/>
<rect x="204" y="790" width="986" height="2" fill="#c46400"/>
<rect x="375" y="237" width="645" height="2" fill="#b40000"/>
<rect x="375" y="722" width="645" height="2" fill="#b40000"/>
<rect x="374" y="237" width="2" height="487" fill="#b40000"/>
<rect x="1018" y="237" width="2" height="487" fill="#b40000"/>
</svg>
<svg class="a" style="left:200px;top:110px" width="996" height="738" viewBox="200 110 996 738">
<circle cx="696" cy="480" r="492" fill="none" stroke="#7a007a" stroke-width="1.1"/>
<rect x="464.0" y="202.1" width="4" height="4" fill="#ffff00"/>
<rect x="279.2" y="282.0" width="4" height="4" fill="#ffff00"/>
<rect x="523.3" y="334.3" width="4" height="4" fill="#ffff00"/>
<ellipse cx="746.2" cy="165.4" rx="3" ry="3.4" fill="#ffff00"/>
<rect x="782.3" y="288.5" width="4" height="4" fill="#ffffff"/>
<rect x="583.2" y="335.5" width="4" height="4" fill="#ffff00"/>
<ellipse cx="922" cy="162" rx="3" ry="3.4" fill="#ffff00"/>
<rect x="1067.5" y="228.5" width="4" height="4" fill="#ffff00"/>
<rect x="220.5" y="445.9" width="4" height="4" fill="#ffff00"/>
<rect x="429.1" y="394.5" width="4" height="4" fill="#ffff00"/>
<rect x="331.5" y="478.8" width="4" height="4" fill="#ffff00"/>
<ellipse cx="407" cy="499.4" rx="3" ry="3.4" fill="#ffff00"/>
<path d="M507.3 588.5h4l2.3 2.3v4l-2.3 2.3h-4l-2.3-2.3v-4z" fill="#ffff00"/>
<rect x="792.2" y="490.9" width="4" height="4" fill="#ffff00"/>
<ellipse cx="972.7" cy="453.6" rx="3" ry="3.4" fill="#ffff00"/>
<rect x="978.2" y="442.5" width="4" height="4" fill="#ffff00"/>
<rect x="1077.5" y="466.7" width="4" height="4" fill="#ffff00"/>
<rect x="410.3" y="776.3" width="4" height="4" fill="#ffff00"/>
<rect x="449.5" y="788.1" width="4" height="4" fill="#ffff00"/>
<path d="M391.2 828.3000000000001h4l2.3 2.3v4l-2.3 2.3h-4l-2.3-2.3v-4z" fill="#ffff00"/>
<path d="M248.6 841.0h4l2.3 2.3v4l-2.3 2.3h-4l-2.3-2.3v-4z" fill="#ffff00"/>
<rect x="504.5" y="843.8" width="4" height="4" fill="#ffff00"/>
<path d="M554.3 629.2h4l2.3 2.3v4l-2.3 2.3h-4l-2.3-2.3v-4z" fill="#ffff00"/>
<ellipse cx="819.3" cy="611.8" rx="3" ry="3.4" fill="#ffff00"/>
<rect x="797.5" y="776.3" width="4" height="4" fill="#ffff00"/>
<path d="M1156.8 727.7h4l2.3 2.3v4l-2.3 2.3h-4l-2.3-2.3v-4z" fill="#ffff00"/>
<path d="M1096 821.3000000000001h4l2.3 2.3v4l-2.3 2.3h-4l-2.3-2.3v-4z" fill="#ffff00"/>
<ellipse cx="966" cy="822.2" rx="3" ry="3.4" fill="#ffff00"/>
<rect x="200" y="110" width="35" height="35" fill="#000"/>
<circle cx="217.5" cy="127" r="13.5" fill="#000080" stroke="#c0c0c0" stroke-width="1"/>
<path d="M204 127H217.5" stroke="#d060a0" stroke-width="1.2"/><path d="M217.5 127V140" stroke="#d0c080" stroke-width="1.2"/>
<path d="M217.5 111l2.5 3h-5z M217.5 143l2.5-3h-5z M201 127l3 2.5v-5z M234 127l-3 2.5v-5z" fill="#00e0e0"/>
</svg>
<div class="a" style="left:266px;top:141px;width:14px;height:15px;background:#000;border:1px solid #666;box-shadow:0 0 0 0.6px #333;color:#e0e060;font-size:12.5px;line-height:13px;white-space:nowrap;overflow:visible"><span style="display:inline-block;transform:scaleX(.92);transform-origin:0 50%;margin-left:1.5px;position:relative;top:1px;-webkit-text-stroke:0.35px #e0e060">2°</span></div>
<div class="a" style="left:266px;top:296px;width:29px;height:15px;background:#000;border:1px solid #666;box-shadow:0 0 0 0.6px #333;color:#e0e060;font-size:12.5px;line-height:13px;white-space:nowrap;overflow:visible"><span style="display:inline-block;transform:scaleX(.92);transform-origin:0 50%;margin-left:1.5px;position:relative;top:1px;-webkit-text-stroke:0.35px #e0e060">2°10'</span></div>
<div class="a" style="left:266px;top:450px;width:29px;height:16px;background:#000;border:1px solid #666;box-shadow:0 0 0 0.6px #333;color:#e0e060;font-size:12.5px;line-height:14px;white-space:nowrap;overflow:visible"><span style="display:inline-block;transform:scaleX(.92);transform-origin:0 50%;margin-left:1.5px;position:relative;top:1px;-webkit-text-stroke:0.35px #e0e060">2°20'</span></div>
<div class="a" style="left:266px;top:606px;width:29px;height:15px;background:#000;border:1px solid #666;box-shadow:0 0 0 0.6px #333;color:#e0e060;font-size:12.5px;line-height:13px;white-space:nowrap;overflow:visible"><span style="display:inline-block;transform:scaleX(.92);transform-origin:0 50%;margin-left:1.5px;position:relative;top:1px;-webkit-text-stroke:0.35px #e0e060">2°30'</span></div>
<div class="a" style="left:266px;top:761px;width:29px;height:15px;background:#000;border:1px solid #666;box-shadow:0 0 0 0.6px #333;color:#e0e060;font-size:12.5px;line-height:13px;white-space:nowrap;overflow:visible"><span style="display:inline-block;transform:scaleX(.92);transform-origin:0 50%;margin-left:1.5px;position:relative;top:1px;-webkit-text-stroke:0.35px #e0e060">2°40'</span></div>
<div class="a" style="left:213px;top:823px;width:45px;height:15px;background:#000;border:1px solid #666;box-shadow:0 0 0 0.6px #333;color:#c8d0d8;font-size:12.5px;line-height:13px;white-space:nowrap;overflow:visible"><span style="display:inline-block;transform:scaleX(.92);transform-origin:0 50%;margin-left:1.5px;position:relative;top:1px;-webkit-text-stroke:0.35px #c8d0d8">15h35m</span></div>
<div class="a" style="left:319px;top:823px;width:64px;height:15px;background:#000;border:1px solid #666;box-shadow:0 0 0 0.6px #333;color:#c8d0d8;font-size:12.5px;line-height:13px;white-space:nowrap;overflow:visible"><span style="display:inline-block;transform:scaleX(.92);transform-origin:0 50%;margin-left:1.5px;position:relative;top:1px;-webkit-text-stroke:0.35px #c8d0d8">15h34m30s</span></div>
<div class="a" style="left:445px;top:823px;width:45px;height:15px;background:#000;border:1px solid #666;box-shadow:0 0 0 0.6px #333;color:#c8d0d8;font-size:12.5px;line-height:13px;white-space:nowrap;overflow:visible"><span style="display:inline-block;transform:scaleX(.92);transform-origin:0 50%;margin-left:1.5px;position:relative;top:1px;-webkit-text-stroke:0.35px #c8d0d8">15h34m</span></div>
<div class="a" style="left:551px;top:823px;width:65px;height:15px;background:#000;border:1px solid #666;box-shadow:0 0 0 0.6px #333;color:#c8d0d8;font-size:12.5px;line-height:13px;white-space:nowrap;overflow:visible"><span style="display:inline-block;transform:scaleX(.92);transform-origin:0 50%;margin-left:1.5px;position:relative;top:1px;-webkit-text-stroke:0.35px #c8d0d8">15h33m30s</span></div>
<div class="a" style="left:677px;top:823px;width:45px;height:15px;background:#000;border:1px solid #666;box-shadow:0 0 0 0.6px #333;color:#c8d0d8;font-size:12.5px;line-height:13px;white-space:nowrap;overflow:visible"><span style="display:inline-block;transform:scaleX(.92);transform-origin:0 50%;margin-left:1.5px;position:relative;top:1px;-webkit-text-stroke:0.35px #c8d0d8">15h33m</span></div>
<div class="a" style="left:785px;top:823px;width:63px;height:15px;background:#000;border:1px solid #666;box-shadow:0 0 0 0.6px #333;color:#c8d0d8;font-size:12.5px;line-height:13px;white-space:nowrap;overflow:visible"><span style="display:inline-block;transform:scaleX(.92);transform-origin:0 50%;margin-left:1.5px;position:relative;top:1px;-webkit-text-stroke:0.35px #c8d0d8">15h32m30s</span></div>
<div class="a" style="left:911px;top:823px;width:43px;height:15px;background:#000;border:1px solid #666;box-shadow:0 0 0 0.6px #333;color:#c8d0d8;font-size:12.5px;line-height:13px;white-space:nowrap;overflow:visible"><span style="display:inline-block;transform:scaleX(.92);transform-origin:0 50%;margin-left:1.5px;position:relative;top:1px;-webkit-text-stroke:0.35px #c8d0d8">15h32m</span></div>
<div class="a" style="left:1017px;top:823px;width:64px;height:15px;background:#000;border:1px solid #666;box-shadow:0 0 0 0.6px #333;color:#c8d0d8;font-size:12.5px;line-height:13px;white-space:nowrap;overflow:visible"><span style="display:inline-block;transform:scaleX(.92);transform-origin:0 50%;margin-left:1.5px;position:relative;top:1px;-webkit-text-stroke:0.35px #c8d0d8">15h31m30s</span></div>
<div class="a" style="left:1142px;top:823px;width:45px;height:15px;background:#000;border:1px solid #666;box-shadow:0 0 0 0.6px #333;color:#c8d0d8;font-size:12.5px;line-height:13px;white-space:nowrap;overflow:visible"><span style="display:inline-block;transform:scaleX(.92);transform-origin:0 50%;margin-left:1.5px;position:relative;top:1px;-webkit-text-stroke:0.35px #c8d0d8">15h31m</span></div>
<div class="a" style="left:240px;top:112px;width:45px;height:16px;background:#ffc0c0;color:#a00000;font-size:12px;line-height:16px;text-align:center">Field</div>
<div class="a" style="left:287px;top:112px;width:46px;height:16px;background:#808080;color:#e8e8e8;font-size:12px;line-height:16px;text-align:center">Horizon</div>
<div class="a" style="left:1102px;top:113px;width:40px;height:14px;background:#808080;color:#e8e850;font-size:11.5px;font-weight:bold;line-height:14px;white-space:nowrap"><span style="display:inline-block;transform:scaleX(.88);transform-origin:0 50%;margin-left:2px">UCAC4</span></div>
<div class="a" style="left:1143px;top:113px;width:47px;height:14px;background:#008000;color:#d8e850;font-size:11.5px;font-weight:bold;line-height:14px;white-space:nowrap"><span style="display:inline-block;transform:scaleX(.88);transform-origin:0 50%;margin-left:3px">RNGCIC</span></div>
<div class="a" style="left:677px;top:154px;color:#c0c8d0;font-size:12.5px;line-height:15px;white-space:nowrap;transform:scaleX(.86);transform-origin:0 0;-webkit-text-stroke:0.3px #c0c8d0">IMX174</div>
<div class="a" style="left:677px;top:221.5px;color:#c0c8d0;font-size:12.5px;line-height:15px;white-space:nowrap;transform:scaleX(.86);transform-origin:0 0;-webkit-text-stroke:0.3px #c0c8d0">IMX430</div>
<div class="a" style="left:568.5px;top:447px;color:#c0c8d0;font-size:12.5px;font-weight:bold;line-height:15px;white-space:nowrap;transform:scaleX(.93);transform-origin:0 0">06/03/2023 22:20:17 UT</div>
<div class="a" style="left:994.5px;top:447px;color:#c0c8d0;font-size:12.5px;font-weight:bold;line-height:15px;white-space:nowrap;transform:scaleX(.93);transform-origin:0 0">22:19</div>
<svg class="a" style="left:200px;top:110px" width="996" height="738" viewBox="200 110 996 738">
<path d="M719 480.5H996.5V465" fill="none" stroke="#808080" stroke-width="1"/>
<rect x="995" y="479" width="3" height="3" fill="#00d000"/>
<path d="M696.4 456.4l2.3 4.3-1.2 11.3h-2.2l-1.2-11.3z M696.4 504.8l2.3-4.3-1.2-11.3h-2.2l-1.2 11.3z M670.7 480.4l4.3 2.3 11.3-1.2v-2.2l-11.3-1.2z M719.6 480.4l-4.3 2.3-11.3-1.2v-2.2l11.3-1.2z" fill="#ff5a5a"/>
<path d="M696.4 460V472M696.4 489V501M674 480.4H688M705 480.4H716" stroke="#30a030" stroke-width="1"/>
<circle cx="696.4" cy="480.4" r="8" fill="#000" stroke="#c8c8c8" stroke-width="1.8"/>
<path d="M692.4 476.4l2.5 2.5M700.4 476.4l-2.5 2.5M692.4 484.4l2.5-2.5M700.4 484.4l-2.5-2.5" stroke="#80d0e0" stroke-width="1"/>
<circle cx="696.4" cy="480.4" r="1.6" fill="#00ff00"/>
<circle cx="670.7" cy="511.3" r="8.4" fill="none" stroke="#ff0000" stroke-width="1.8"/>
<path d="M670.7 504.3v3.5M670.7 518.3v-3.5M663.7 511.3h3.5M677.7 511.3h-3.5" stroke="#ff0000" stroke-width="1.5"/>
<path d="M668.9000000000001 507.8h3.6M668.9000000000001 514.8h3.6M667.2 509.5v3.6M674.2 509.5v3.6" stroke="#ff0000" stroke-width="1.3"/>
</svg>
<div class="a" style="left:1193px;top:108px;width:3px;height:767px;background:#f0f0f0"></div>
<div class="a" style="left:196px;top:108px;width:3px;height:742px;background:#f8f8f8"></div><div class="a" style="left:199px;top:108px;width:1px;height:742px;background:#a8a8a8"></div>
<div class="a" style="left:199px;top:107px;width:997px;height:3px;background:linear-gradient(#b0b0b0,#686868)"></div>
<div class="a" style="left:0;top:848px;width:1196px;height:2px;background:#f4f4f4"></div>
<div class="a" style="left:3px;top:853px;width:192px;height:20px;background:#f0f0f0;border-top:2px solid #888;border-left:2px solid #888;border-right:1px solid #fafafa;border-bottom:1px solid #fafafa;font-size:12px;line-height:16px;white-space:nowrap;overflow:hidden;background:#f4f4f4"><span class="sx" style="font-size:13px;padding-left:3px">Ready</span></div>
<span class="a" style="left:200px;top:855px;font-size:12px;line-height:14px">RA:</span>
<div class="a" style="left:221px;top:853px;width:20px;height:19px;background:#f0f0f0;border-top:2px solid #888;border-left:2px solid #888;border-right:1px solid #fafafa;border-bottom:1px solid #fafafa;font-size:12px;line-height:16px;white-space:nowrap;overflow:hidden;color:#a01818;padding-left:1px">15</div>
<div class="a" style="left:241px;top:853px;width:21px;height:19px;background:#f0f0f0;border-top:2px solid #888;border-left:2px solid #888;border-right:1px solid #fafafa;border-bottom:1px solid #fafafa;font-size:12px;line-height:16px;white-space:nowrap;overflow:hidden;color:#a01818;padding-left:1px">33</div>
<div class="a" style="left:262px;top:853px;width:20px;height:19px;background:#f0f0f0;border-top:2px solid #888;border-left:2px solid #888;border-right:1px solid #fafafa;border-bottom:1px solid #fafafa;font-size:12px;line-height:16px;white-space:nowrap;overflow:hidden;color:#a01818;padding-left:1px">01</div>
<span class="a" style="left:288px;top:855px;font-size:12px;line-height:14px">DE:</span>
<div class="a" style="left:309px;top:853px;width:26px;height:19px;background:#f0f0f0;border-top:2px solid #888;border-left:2px solid #888;border-right:1px solid #fafafa;border-bottom:1px solid #fafafa;font-size:12px;line-height:16px;white-space:nowrap;overflow:hidden;color:#a01818;padding-left:1px">+02</div>
<div class="a" style="left:335px;top:853px;width:20px;height:19px;background:#f0f0f0;border-top:2px solid #888;border-left:2px solid #888;border-right:1px solid #fafafa;border-bottom:1px solid #fafafa;font-size:12px;line-height:16px;white-space:nowrap;overflow:hidden;color:#a01818;padding-left:1px">21</div>
<div class="a" style="left:355px;top:853px;width:21px;height:19px;background:#f0f0f0;border-top:2px solid #888;border-left:2px solid #888;border-right:1px solid #fafafa;border-bottom:1px solid #fafafa;font-size:12px;line-height:16px;white-space:nowrap;overflow:hidden;color:#a01818;padding-left:1px">24</div>
<span class="a" style="left:380px;top:855px;font-size:12px;line-height:14px">Field:</span>
<div class="a" style="left:410px;top:853px;width:26px;height:19px;background:#f0f0f0;border-top:2px solid #888;border-left:2px solid #888;border-right:1px solid #fafafa;border-bottom:1px solid #fafafa;font-size:12px;line-height:16px;white-space:nowrap;overflow:hidden;color:#a01818;text-align:right;padding-right:2px">01</div>
<div class="a" style="left:436px;top:853px;width:21px;height:19px;background:#f0f0f0;border-top:2px solid #888;border-left:2px solid #888;border-right:1px solid #fafafa;border-bottom:1px solid #fafafa;font-size:12px;line-height:16px;white-space:nowrap;overflow:hidden;color:#a01818;text-align:right;padding-right:2px">03</div>
<div class="a" style="left:457px;top:853px;width:19px;height:19px;background:#f0f0f0;border-top:2px solid #888;border-left:2px solid #888;border-right:1px solid #fafafa;border-bottom:1px solid #fafafa;font-size:12px;line-height:16px;white-space:nowrap;overflow:hidden;color:#a01818;text-align:right;padding-right:2px">37</div>
<svg class="a" style="left:480px;top:850px" width="30" height="25" viewBox="480 850 30 25"><defs><radialGradient id="gb" cx="0.35" cy="0.3" r="0.7"><stop offset="0" stop-color="#c0ffc0"/><stop offset="0.35" stop-color="#20e020"/><stop offset="1" stop-color="#00a000"/></radialGradient></defs><circle cx="488.7" cy="862.6" r="6.5" fill="url(#gb)" stroke="#006000" stroke-width="0.5"/><circle cx="503.8" cy="862.6" r="6.5" fill="url(#gb)" stroke="#006000" stroke-width="0.5"/></svg>
<div class="a" style="left:516px;top:852px;width:114px;height:12px;background:#ff0000;color:#ffff60;font-weight:bold;font-size:11.5px;line-height:12px;text-align:center;white-space:nowrap;letter-spacing:0">06/03/2023 22:20:17</div>
<div class="a" style="left:516px;top:864px;width:114px;height:9px;color:#202020;font-size:9px;line-height:9px;text-align:center;white-space:nowrap">+8°34'14'' / +47°31'10''</div>
<div class="a" style="left:635px;top:853px;width:17px;height:17px;border-radius:50%;background:#ffff90"></div>
<div class="a" style="left:665px;top:853px;width:58px;height:2px;background:#909090"></div>
<div class="a" style="left:695px;top:852px;width:2px;height:6px;background:#707070"></div>
<div class="a" style="left:665px;top:864px;width:58px;height:2px;background:#909090"></div>
<div class="a" style="left:667px;top:864px;width:2px;height:8px;background:#707070"></div>
<div class="a" style="left:735px;top:852px;width:20px;height:20px;background:#c8ffc8;border-top:1px solid #fff;border-left:1px solid #fff;border-right:2px solid #707070;border-bottom:2px solid #707070;color:#0000a0;font-weight:bold;font-size:16px;line-height:16px;text-align:center">+</div>
<div class="a" style="left:756px;top:852px;width:20px;height:20px;background:#c8ffc8;border-top:1px solid #fff;border-left:1px solid #fff;border-right:2px solid #707070;border-bottom:2px solid #707070;color:#0000a0;font-weight:bold;font-size:16px;line-height:16px;text-align:center">−</div>
<div class="a" style="left:778px;top:852px;width:91px;height:20px;background:#e2e2e2"></div>
<div class="a" style="left:779px;top:852px;font-size:10px;line-height:10px;color:#a01818;white-space:nowrap">JD: 2460099.43075<br>ST: 15:43:01</div>
<div class="a" style="left:1061px;top:853px;width:131px;height:19px;background:#f0f0f0;border-top:2px solid #888;border-left:2px solid #888;border-right:1px solid #fafafa;border-bottom:1px solid #fafafa;font-size:12px;line-height:16px;white-space:nowrap;overflow:hidden;background:#f4f4f4;color:#206020;padding-left:2px;font-size:12px;letter-spacing:-0.25px">15h34m30s &nbsp;+02°45'00''</div>
<div class="a" style="left:54px;top:843px;width:114px;height:40px;background:#2b2b2b;border:1px solid #1a1a1a;border-radius:7px;color:#f4f4f4;font-size:13.5px;line-height:30px;padding-left:8px;white-space:nowrap">Google Chrome</div>
</div></body></html>
